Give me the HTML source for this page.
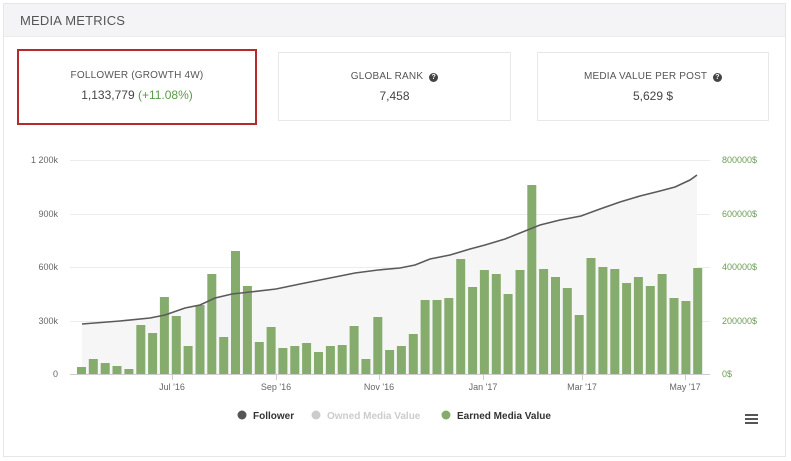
<!DOCTYPE html>
<html><head><meta charset="utf-8"><style>
*{margin:0;padding:0;box-sizing:border-box}
body{width:791px;height:461px;background:#fff;font-family:"Liberation Sans",sans-serif;position:relative;overflow:hidden}
.panel{position:absolute;left:3px;top:3px;width:783px;height:454px;border:1px solid #e6e6e6;background:#fff}
.hdr{position:absolute;left:0;top:0;width:100%;height:33px;background:#f4f4f6;border-bottom:1px solid #ececec;font-size:13px;color:#555;padding:9px 0 0 16px;letter-spacing:.2px}
.card{position:absolute;border:1px solid #e8e8e8;text-align:center;color:#555}
.card .t{font-size:10px;margin-top:18px;letter-spacing:.2px}
.card .v{font-size:12px;margin-top:7px;color:#444}
.q{display:inline-block;width:9px;height:9px;border-radius:50%;background:#444;color:#fff;font-size:7px;line-height:9px;font-weight:bold;vertical-align:0px;margin-left:3px}
</style></head><body>
<div class="panel">
<div class="hdr">MEDIA METRICS</div>
</div>
<div class="card" style="left:17px;top:49px;width:240px;height:76px;border:2px solid #b52a2a"><div class="t" style="margin-top:19px">FOLLOWER (GROWTH 4W)</div><div class="v">1,133,779 <span style="color:#5a9a4a">(+11.08%)</span></div></div>
<div class="card" style="left:278px;top:52px;width:233px;height:69px"><div class="t">GLOBAL RANK <span class="q">?</span></div><div class="v">7,458</div></div>
<div class="card" style="left:537px;top:52px;width:232px;height:69px"><div class="t">MEDIA VALUE PER POST <span class="q">?</span></div><div class="v">5,629 $</div></div>
<svg style="position:absolute;left:0;top:0" width="791" height="461" font-family="Liberation Sans, sans-serif">
<g stroke="#ececec" stroke-width="1">
<line x1="70" y1="160.5" x2="710" y2="160.5"/><line x1="70" y1="214.5" x2="710" y2="214.5"/><line x1="70" y1="267.5" x2="710" y2="267.5"/><line x1="70" y1="321.5" x2="710" y2="321.5"/>
</g>
<path d="M82,324 L120,321 L150,318 L165,315 L185,308 L200,305 L215,298 L232,294 L250,292 L276,289 L300,284 L330,278 L355,273 L378,270 L400,268 L415,265 L430,259 L450,255 L470,249 L485,245 L505,239 L520,233 L540,225 L560,220 L581,216 L600,209 L620,202 L640,196 L660,191 L675,187 L690,180 L697,175 L697,374 L82,374 Z" fill="#f6f6f6"/>
<g fill="#86ac6d" id="bars"></g>
<path d="M82,324 L120,321 L150,318 L165,315 L185,308 L200,305 L215,298 L232,294 L250,292 L276,289 L300,284 L330,278 L355,273 L378,270 L400,268 L415,265 L430,259 L450,255 L470,249 L485,245 L505,239 L520,233 L540,225 L560,220 L581,216 L600,209 L620,202 L640,196 L660,191 L675,187 L690,180 L697,175" fill="none" stroke="#5a5a5a" stroke-width="1.6"/>
<line x1="70" y1="374.5" x2="710" y2="374.5" stroke="#ccc"/>
<g stroke="#ccc"><line x1="172.5" y1="374" x2="172.5" y2="380"/><line x1="276.5" y1="374" x2="276.5" y2="380"/><line x1="379.5" y1="374" x2="379.5" y2="380"/><line x1="483.5" y1="374" x2="483.5" y2="380"/><line x1="582.5" y1="374" x2="582.5" y2="380"/><line x1="685.5" y1="374" x2="685.5" y2="380"/></g>
<g font-size="9" fill="#666" text-anchor="end">
<text x="58" y="163">1 200k</text><text x="58" y="217">900k</text><text x="58" y="270">600k</text><text x="58" y="324">300k</text><text x="58" y="377">0</text></g>
<g font-size="9" fill="#6e9a58"><text x="722" y="163">800000$</text><text x="722" y="217">600000$</text><text x="722" y="270">400000$</text><text x="722" y="324">200000$</text><text x="722" y="377">0$</text></g>
<g font-size="9" fill="#666" text-anchor="middle"><text x="172" y="390">Jul '16</text><text x="276" y="390">Sep '16</text><text x="379" y="390">Nov '16</text><text x="483" y="390">Jan '17</text><text x="582" y="390">Mar '17</text><text x="685" y="390">May '17</text></g>
<g font-size="10" font-weight="bold">
<circle cx="242" cy="415" r="4.5" fill="#555"/><text x="253" y="419" fill="#333">Follower</text>
<circle cx="316" cy="415" r="4.5" fill="#ccc"/><text x="327" y="419" fill="#ccc">Owned Media Value</text>
<circle cx="446" cy="415" r="4.5" fill="#86ac6d"/><text x="457" y="419" fill="#333">Earned Media Value</text></g>
<g fill="#555"><rect x="745" y="414" width="13" height="2"/><rect x="745" y="418" width="13" height="2"/><rect x="745" y="422" width="13" height="2"/></g>
</svg>
<script>
var t=[367,359,363,366,369,325,333,297,316,346,305,274,337,251,286,342,327,348,346,343,352,346,345,326,359,317,350,346,334,300,300,298,259,287,270,274,294,270,185,269,277,288,315,258,267,269,283,277,286,274,298,301,268];
var g=document.getElementById('bars'),s='';
for(var i=0;i<t.length;i++){var x=77+i*11.85;s+='<rect x="'+x.toFixed(1)+'" y="'+t[i]+'" width="9" height="'+(374-t[i])+'"/>';}
g.innerHTML=s;
</script>
</body></html>
